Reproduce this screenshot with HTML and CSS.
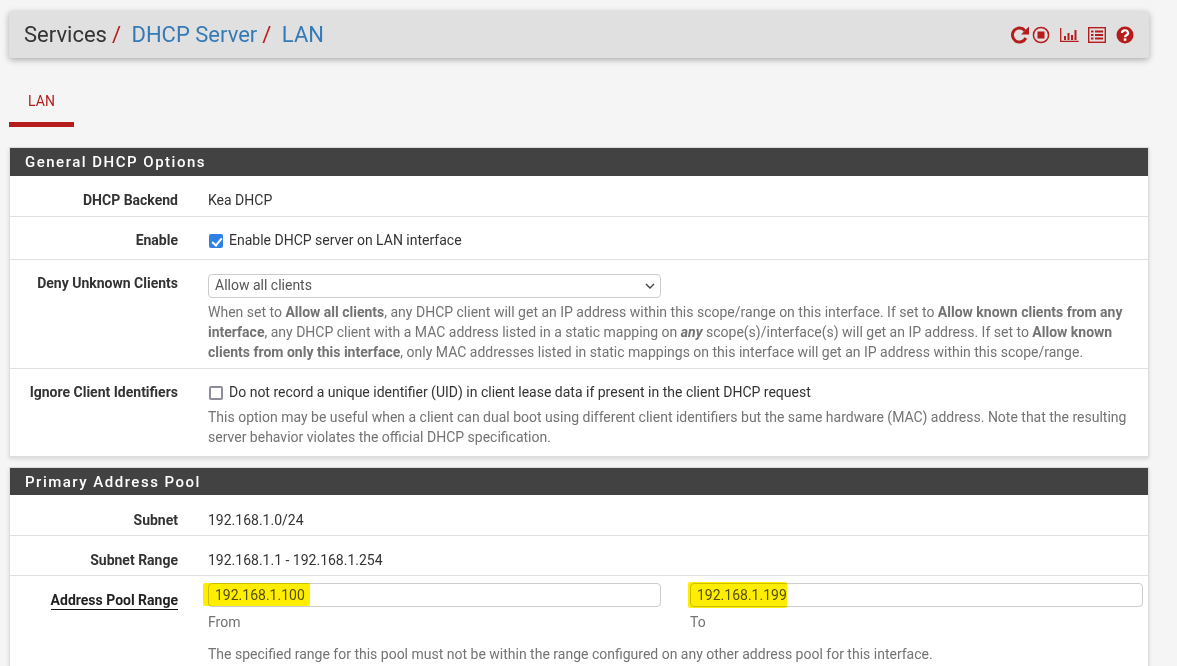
FILE: index.html
```html
<!DOCTYPE html>
<html lang="en">
<head>
  <meta charset="UTF-8" />
  <title>Services / DHCP Server / LAN</title>
  <link rel="stylesheet" href="styles.css">
</head>
<body>

  <div class="container">
    <!-- Breadcrumb bar -->
    <header class="crumbs">
      <h1>
        <span>Services</span><i>/</i>
        <a href="#">DHCP Server</a><i>/</i>
        <a href="#">LAN</a>
      </h1>
      <div class="icons">
        <svg class="ic-reload" width="20" height="20" viewBox="0 0 20 20"><path d="M15.8 13a7 7 0 1 1-.9-7.300" fill="none" stroke="#b71c1c" stroke-width="3"/><path d="M19 1.500v8h-8z" fill="#b71c1c"/></svg>
        <svg class="ic-stop" width="18" height="18" viewBox="0 0 18 18"><circle cx="9" cy="9" r="7.6" fill="none" stroke="#b71c1c" stroke-width="1.5"/><rect x="5.5" y="5.5" width="7" height="7" fill="#b71c1c"/></svg>
        <svg class="ic-chart" width="19" height="16" viewBox="0 0 19 16"><path d="M.7 1v13.3h18" fill="none" stroke="#b71c1c" stroke-width="1.3"/><path d="M4 9h2v4H4zM7.500 6h2v7h-2zM11 8h2v5h-2zM14.500 3h2v10h-2z" fill="#b71c1c"/></svg>
        <svg class="ic-list" width="18" height="16" viewBox="0 0 18 16"><rect x=".7" y=".7" width="16.600" height="14.600" fill="none" stroke="#b71c1c" stroke-width="1.400"/><path d="M3 3.500h2.500v2H3zM3 7h2.500v2H3zM3 10.500h2.500v2H3zM7 3.500h8v2H7zM7 7h8v2H7zM7 10.500h8v2H7z" fill="#b71c1c"/></svg>
        <svg class="ic-help" width="18" height="18" viewBox="0 0 18 18"><circle cx="9" cy="9" r="8.500" fill="#b71c1c"/><path d="M6 7a3 2.700 0 1 1 4.500 2.300C9.500 9.900 9 10.300 9 11.200" fill="none" stroke="#fff" stroke-width="2.200"/><rect x="7.800" y="12.400" width="2.500" height="2.400" fill="#fff"/></svg>
      </div>
    </header>

    <!-- Tabs -->
    <nav class="tabs">
      <a class="tab" href="#">LAN</a>
    </nav>

    <!-- General options -->
    <section class="panel">
      <h2>General DHCP Options</h2>
      <div class="row row-backend">
        <div class="label">DHCP Backend</div>
        <div class="field">Kea DHCP</div>
      </div>
      <div class="row row-enable">
        <div class="label">Enable</div>
        <div class="field">
          <label class="check"><input type="checkbox" checked /> Enable DHCP server on LAN interface</label>
        </div>
      </div>
      <div class="row row-deny">
        <div class="label">Deny Unknown Clients</div>
        <div class="field">
          <div class="select-wrap">
            <select class="select">
              <option>Allow all clients</option>
            </select>
            <svg class="chevron" width="10" height="6" viewBox="0 0 10 6"><path d="M1 1l4 4 4-4" fill="none" stroke="#444" stroke-width="1.400"/></svg>
          </div>
          <p class="help">When set to <b>Allow all clients</b>, any DHCP client will get an IP address within this scope/range on this interface. If set to <b>Allow known clients from any interface</b>, any DHCP client with a MAC address listed in a static mapping on <b><em>any</em></b> scope(s)/interface(s) will get an IP address. If set to <b>Allow known clients from only this interface</b>, only MAC addresses listed in static mappings on this interface will get an IP address within this scope/range.</p>
        </div>
      </div>
      <div class="row row-ignore">
        <div class="label">Ignore Client Identifiers</div>
        <div class="field">
          <label class="check"><input type="checkbox" /> Do not record a unique identifier (UID) in client lease data if present in the client DHCP request</label>
          <p class="help">This option may be useful when a client can dual boot using different client identifiers but the same hardware (MAC) address. Note that the resulting server behavior violates the official DHCP specification.</p>
        </div>
      </div>
    </section>

    <!-- Address pool -->
    <section class="panel">
      <h2>Primary Address Pool</h2>
      <div class="row row-subnet">
        <div class="label">Subnet</div>
        <div class="field">192.168.1.0/24</div>
      </div>
      <div class="row row-range">
        <div class="label">Subnet Range</div>
        <div class="field">192.168.1.1 - 192.168.1.254</div>
      </div>
      <div class="row row-pool">
        <div class="label"><span class="under">Address Pool Range</span></div>
        <div class="field">
          <div class="pair">
            <div class="cell">
              <div class="hl-wrap">
                <input class="text" type="text" value="192.168.1.100" />
                <span class="marker marker-from"></span>
              </div>
              <div class="hint">From</div>
            </div>
            <div class="cell">
              <div class="hl-wrap">
                <input class="text" type="text" value="192.168.1.199" />
                <span class="marker marker-to"></span>
              </div>
              <div class="hint">To</div>
            </div>
          </div>
          <p class="help help-pool">The specified range for this pool must not be within the range configured on any other address pool for this interface.</p>
        </div>
      </div>
    </section>
  </div>

</body>
</html>
```

FILE: styles.css
```css
/* Basic Reset */
* {
  box-sizing: border-box;
}

html, body {
  height: 666px;
  overflow: hidden;
}

body {
  font-family: Roboto, Arial, sans-serif;
  font-size: 14px;
  line-height: 20px;
  margin: 0;
  background: #f5f5f5;
  color: #333;
}

a {
  text-decoration: none;
}

.container {
  width: 1140px;
  margin-left: 9px;
  padding-top: 11px;
}

/* Breadcrumb */
.crumbs {
  height: 47px;
  background: #e0e0e0;
  border-radius: 3px;
  box-shadow: 0 2px 6px rgba(0, 0, 0, 0.3);
  display: flex;
  justify-content: space-between;
  align-items: center;
  padding: 0 15px;
}

.crumbs h1 {
  margin: 0;
  font-size: 22px;
  font-weight: 400;
  line-height: 47px;
  color: #333;
}

.crumbs h1 a {
  color: #337ab7;
  margin-left: 5px;
}

.crumbs h1 i {
  color: #b71c1c;
  font-style: normal;
  margin-left: 5px;
}

.icons {
  display: flex;
  align-items: center;
  margin-top: 1px;
}

.ic-stop { margin-left: 2px; }
.ic-chart { margin-left: 10px; }
.ic-list { margin-left: 9px; }
.ic-help { margin-left: 10px; }

/* Tabs */
.tabs {
  margin-top: 18px;
  display: flex;
}

.tab {
  display: block;
  width: 65px;
  height: 51px;
  padding-top: 15px;
  text-align: center;
  color: #b71c1c;
  border-bottom: 5px solid #b71c1c;
}

/* Panels */
.panel {
  margin-bottom: 10px;
  background: #fff;
  border: 1px solid #ddd;
  box-shadow: 0 2px 4px rgba(0, 0, 0, 0.12);
}

.panel:first-of-type {
  margin-top: 20px;
}

.panel h2 {
  margin: 0;
  height: 28px;
  background: #424242;
  color: #fff;
  font-size: 15px;
  font-weight: 500;
  letter-spacing: 1.5px;
  line-height: 28px;
  padding-left: 15px;
}

.panel + .panel h2 {
  height: 27px;
}

.row {
  display: grid;
  grid-template-columns: 168px 1fr;
  column-gap: 30px;
  border-bottom: 1px solid #e0e0e0;
  padding-top: 13px;
}

.row:last-child {
  border-bottom: 0;
}

.label {
  text-align: right;
  font-weight: 700;
  color: #333;
}

.under {
  color: #222;
  border-bottom: 1px solid #111;
  padding-bottom: 1px;
}

.field {
  padding-right: 5px;
}

.row-backend { height: 41px; padding-top: 14px; }
.row-enable { height: 43px; }
.row-deny { height: 109px; }
.row-ignore { height: 87px; }
.row-subnet { height: 41px; padding-top: 15px; }
.row-range { height: 40px; padding-top: 14px; }
.row-pool { height: 110px; padding-top: 14px; }

/* Checkboxes */
.check {
  display: flex;
  align-items: center;
  gap: 6px;
}

.check input {
  appearance: none;
  position: relative;
  flex: none;
  width: 14px;
  height: 14px;
  margin: 2px 0 0 1px;
  background: #fff;
  border: 2px solid #8d8d9b;
  border-radius: 2px;
}

.check input:checked {
  background: #2f80e4;
  border-color: #2f80e4;
}

.check input:checked::after {
  content: "";
  position: absolute;
  left: 3px;
  top: 0;
  width: 4px;
  height: 8px;
  border: solid #fff;
  border-width: 0 2px 2px 0;
  transform: rotate(40deg);
}

/* Select */
.select-wrap {
  position: relative;
  width: 453px;
  margin-top: 1px;
}

.select {
  appearance: none;
  display: block;
  width: 100%;
  height: 24px;
  padding: 0 6px 2px;
  font: 14px Roboto, Arial, sans-serif;
  color: #555;
  background: #fff;
  border: 1px solid #ccc;
  border-radius: 4px;
}

.chevron {
  position: absolute;
  right: 6px;
  top: 9px;
}

.help {
  margin: 0;
  color: #737373;
  padding-top: 4px;
}

.row-ignore .help {
  padding-top: 5px;
}

/* Address pool inputs */
.pair {
  display: flex;
  gap: 29px;
  margin-top: -7px;
}

.cell {
  width: 453px;
}

.hl-wrap {
  position: relative;
}

.text {
  display: block;
  width: 100%;
  height: 24px;
  padding: 0 6px;
  font: 14px Roboto, Arial, sans-serif;
  color: #555;
  background: #fff;
  border: 1px solid #ccc;
  border-radius: 4px;
}

.marker {
  position: absolute;
  background: #ffee00;
  mix-blend-mode: multiply;
  border-radius: 2px;
}

.marker-from {
  left: -5px;
  top: 0;
  width: 107px;
  height: 23px;
}

.marker-to {
  left: -2px;
  top: -1px;
  width: 99px;
  height: 26px;
}

.hint {
  color: #737373;
  margin-top: 5px;
}

.help-pool {
  padding-top: 12px;
}
```
